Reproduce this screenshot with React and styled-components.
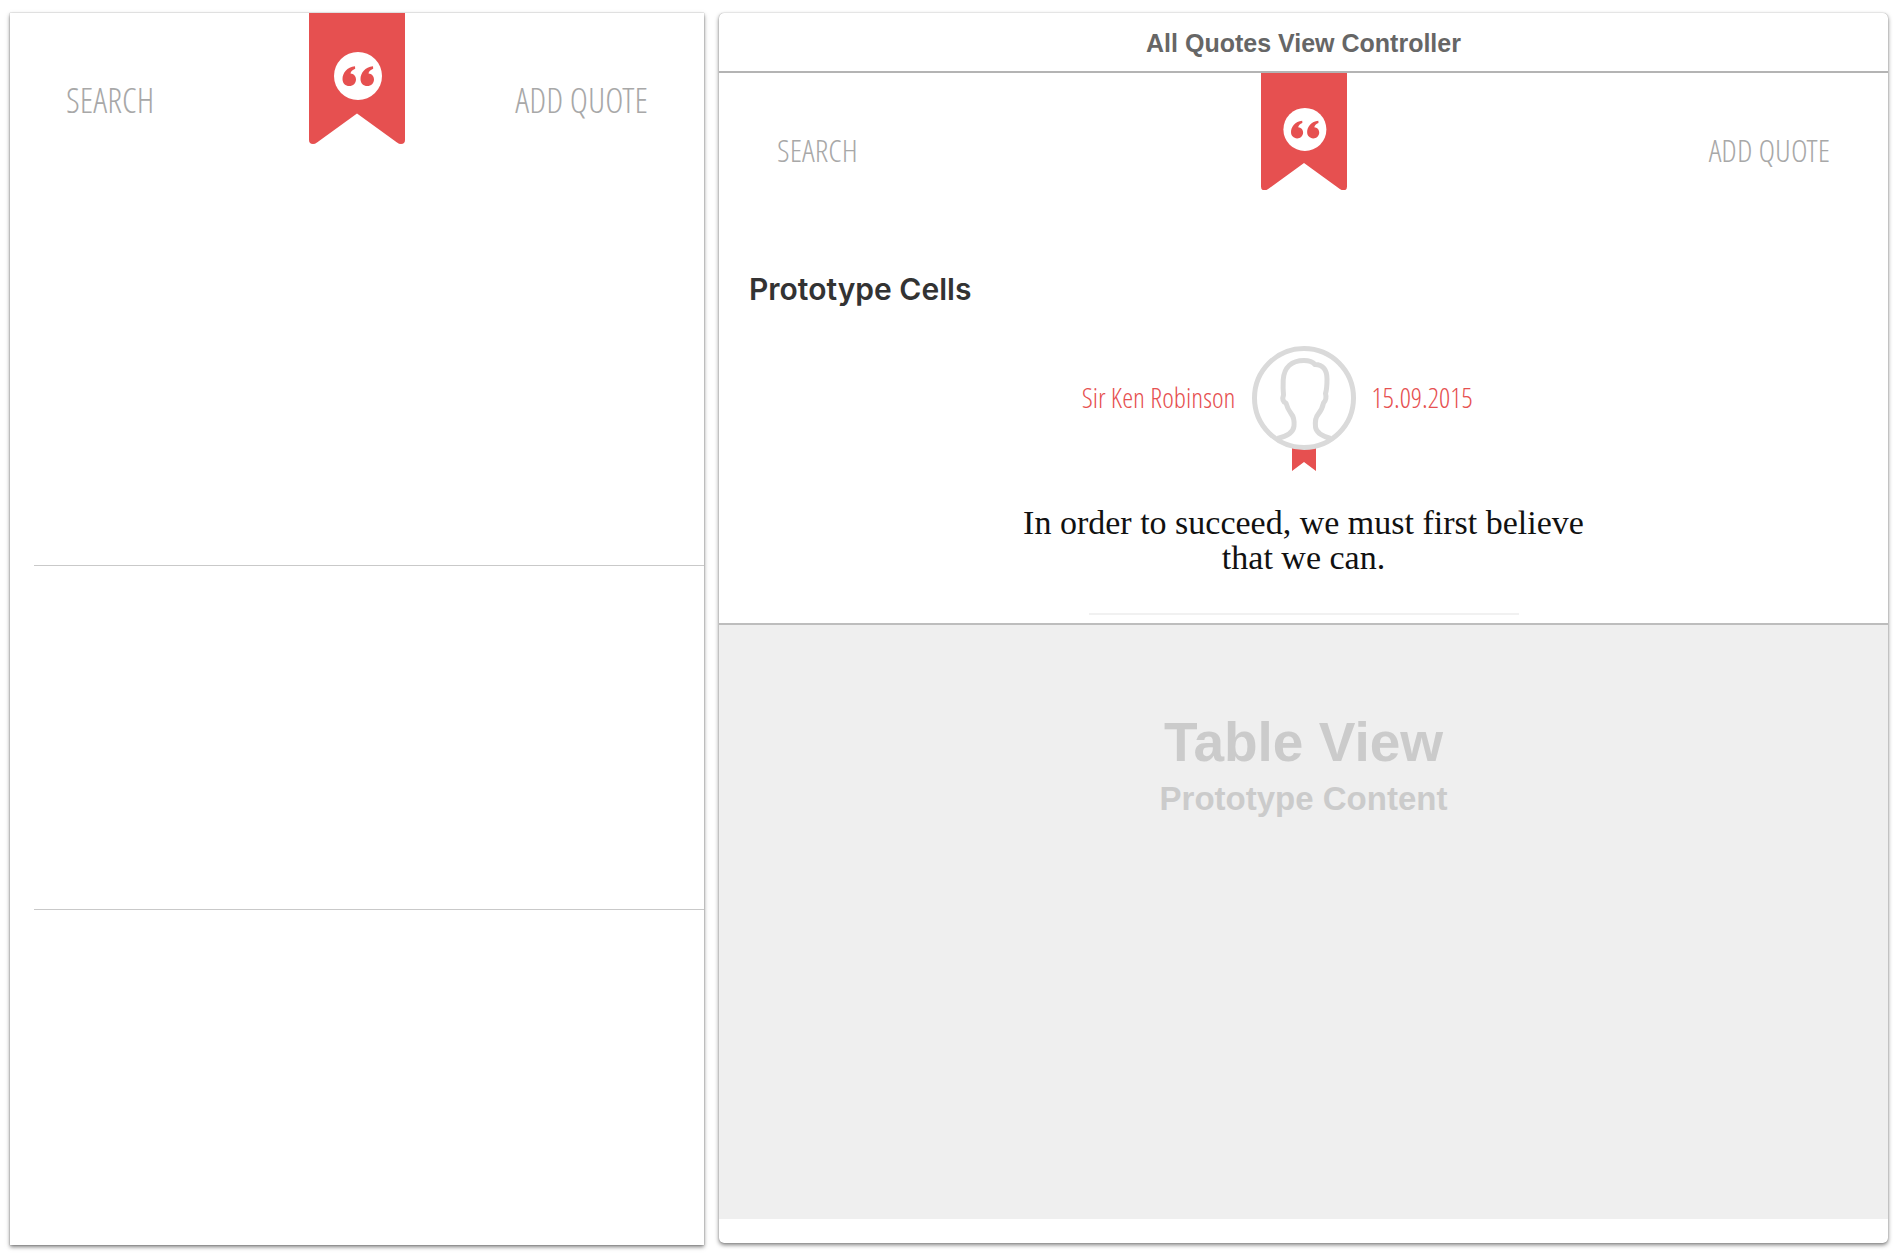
import React from 'react';
import styled, { createGlobalStyle } from 'styled-components';

const red = '#e65050';
const condensed = '"Avenir Next Condensed", "Open Sans Condensed Light", "Open Sans Light Condensed", "OpenSans-CondensedLight", "Roboto Condensed", "Noto Sans Condensed", "Open Sans Condensed", "Open Sans", sans-serif';

const Global = createGlobalStyle`
  * { box-sizing: border-box; }
  body { margin: 0; background: #fff; }
  button { border: 0; padding: 0; background: none; cursor: pointer; }
  h1, h2, p { margin: 0; }
`;

const Page = styled.main`
  display: grid;
  grid-template-columns: 694fr 1169fr;
  gap: 15px;
  min-height: 100vh;
  padding: 13px 12px 13px 10px;
`;

const Panel = styled.section`
  display: flex;
  flex-direction: column;
  background: #fff;
  border-radius: ${(p) => (p.$rounded ? '5px' : '0')};
  margin-bottom: ${(p) => (p.$rounded ? '2px' : '0')};
  box-shadow: 0 2px 4px rgba(0, 0, 0, 0.5), 0 0 1px rgba(0, 0, 0, 0.4);
  overflow: hidden;
`;

const NavBar = styled.header`
  display: grid;
  grid-template-columns: 1fr auto 1fr;
  align-items: start;
  padding: 0 ${(p) => (p.$large ? '56px' : '58px')};
`;

const NavButton = styled.button`
  justify-self: ${(p) => (p.$end ? 'end' : 'start')};
  margin-top: ${(p) => (p.$large ? '67px' : '57px')};
  font: 300 ${(p) => (p.$large ? '35px' : '32px')} / 40px ${condensed};
  color: #a8a8a8;
`;

const Ribbon = styled.svg`
  display: block;
  width: ${(p) => (p.$large ? '96px' : '86px')};
  height: auto;
`;

const EmptyRow = styled.div`
  flex: ${(p) => p.$grow} 1 0;
  margin-left: 24px;
  border-bottom: ${(p) => (p.$last ? '0' : '1px solid #c9c9c9')};
`;

const TitleBar = styled.h1`
  height: 60px;
  border-bottom: 2px solid #b4b4b4;
  font: bold 25px / 60px "Helvetica Neue", "Liberation Sans", sans-serif;
  color: #666;
  text-align: center;
`;

const SectionTitle = styled.h2`
  margin: 79px 30px 0;
  font: 600 30px / 40px Inter, sans-serif;
  color: #333;
`;

const Cell = styled.article`
  display: flex;
  flex-direction: column;
  align-items: center;
  padding: 37px 24px 8px;
  border-bottom: 2px solid #bdbdbd;
`;

const Byline = styled.div`
  display: grid;
  grid-template-columns: 1fr auto 1fr;
  align-items: start;
  gap: 16px;
  width: 100%;
`;

const Meta = styled.span`
  justify-self: ${(p) => (p.$end ? 'end' : 'start')};
  font: 400 28px / 102px ${condensed};
  color: ${red};
`;

const Avatar = styled.svg`
  display: block;
  width: 104px;
  height: 125px;
`;

const Quote = styled.p`
  max-width: 600px;
  margin-top: 34px;
  font: 34px / 35px Georgia, "Liberation Serif", serif;
  color: #111;
  text-align: center;
`;

const Divider = styled.hr`
  width: 430px;
  height: 2px;
  margin: 38px 0 0;
  border: 0;
  background: #f1f1f1;
`;

const TableArea = styled.div`
  flex: 1;
  margin-bottom: 24px;
  padding-top: 85px;
  background: #efefef;
  color: #cbcbcb;
  text-align: center;
  font-family: "Helvetica Neue", "Liberation Sans", sans-serif;
`;

const TableTitle = styled.p`
  font-size: 55px;
  font-weight: bold;
  line-height: 64px;
`;

const TableSubtitle = styled.p`
  font-size: 33px;
  font-weight: bold;
  line-height: 50px;
`;

const mark = 'M46 53.2C38 54 33.5 60 33.5 66c0 4.400 3 7 6.800 7 3.800 0 6.700-2.700 6.700-6.500 0-3.300-2.400-5.700-5.500-5.900.300-2.100 2-3.800 4.700-4.800z';

function Bookmark({ large }) {
  return (
    <Ribbon $large={large} viewBox="0 0 96 131" aria-hidden="true">
      <path d="M0 0H96V127Q96 131 92 131Q90 131 88 129.500L48 100.500L8 129.500Q6 131 4 131Q0 131 0 127Z" fill={red} />
      <circle cx="49" cy="63" r="24" fill="#fff" />
      <path d={mark} fill={red} />
      <path d={mark} transform="translate(18 0)" fill={red} />
    </Ribbon>
  );
}

function Navigation({ large }) {
  return (
    <NavBar $large={large}>
      <NavButton $large={large}>SEARCH</NavButton>
      <Bookmark large={large} />
      <NavButton $large={large} $end>ADD QUOTE</NavButton>
    </NavBar>
  );
}

function Portrait() {
  return (
    <Avatar viewBox="0 0 104 125" aria-hidden="true">
      <path d="M40 102H64V125L52 116L40 125Z" fill={red} />
      <g fill="#fff" stroke="#dadada" strokeWidth="5">
        <circle cx="52" cy="52" r="49.500" />
        <path
          strokeLinejoin="round"
          d="M25.500 92.500C36 90 41.500 86 42 80C42.500 74 42 71 39 67.500C36 63.500 35 61 34 57C31 56 30 53 31.500 49C31 44 31 39 31.200 34C32 21 40 14.500 52 14.500C57 14.500 60 15 63 18.500C71 18.500 75 24 75 33C75 38 75 43 73.500 47.500C74.500 51 74.500 54 71.500 57C70.500 62 69 65 66 68.500C63 72 63 76 63.500 81C64 87 70 90 78.500 92.500"
        />
      </g>
    </Avatar>
  );
}

export default function App() {
  return (
    <>
      <Global />
      <Page>
        <Panel>
          <Navigation large />
          <EmptyRow $grow={422} />
          <EmptyRow $grow={343} />
          <EmptyRow $grow={336} $last />
        </Panel>
        <Panel $rounded>
          <TitleBar>All Quotes View Controller</TitleBar>
          <Navigation />
          <SectionTitle>Prototype Cells</SectionTitle>
          <Cell>
            <Byline>
              <Meta $end>Sir Ken Robinson</Meta>
              <Portrait />
              <Meta>15.09.2015</Meta>
            </Byline>
            <Quote>In order to succeed, we must first believe that we can.</Quote>
            <Divider />
          </Cell>
          <TableArea>
            <TableTitle>Table View</TableTitle>
            <TableSubtitle>Prototype Content</TableSubtitle>
          </TableArea>
        </Panel>
      </Page>
    </>
  );
}
